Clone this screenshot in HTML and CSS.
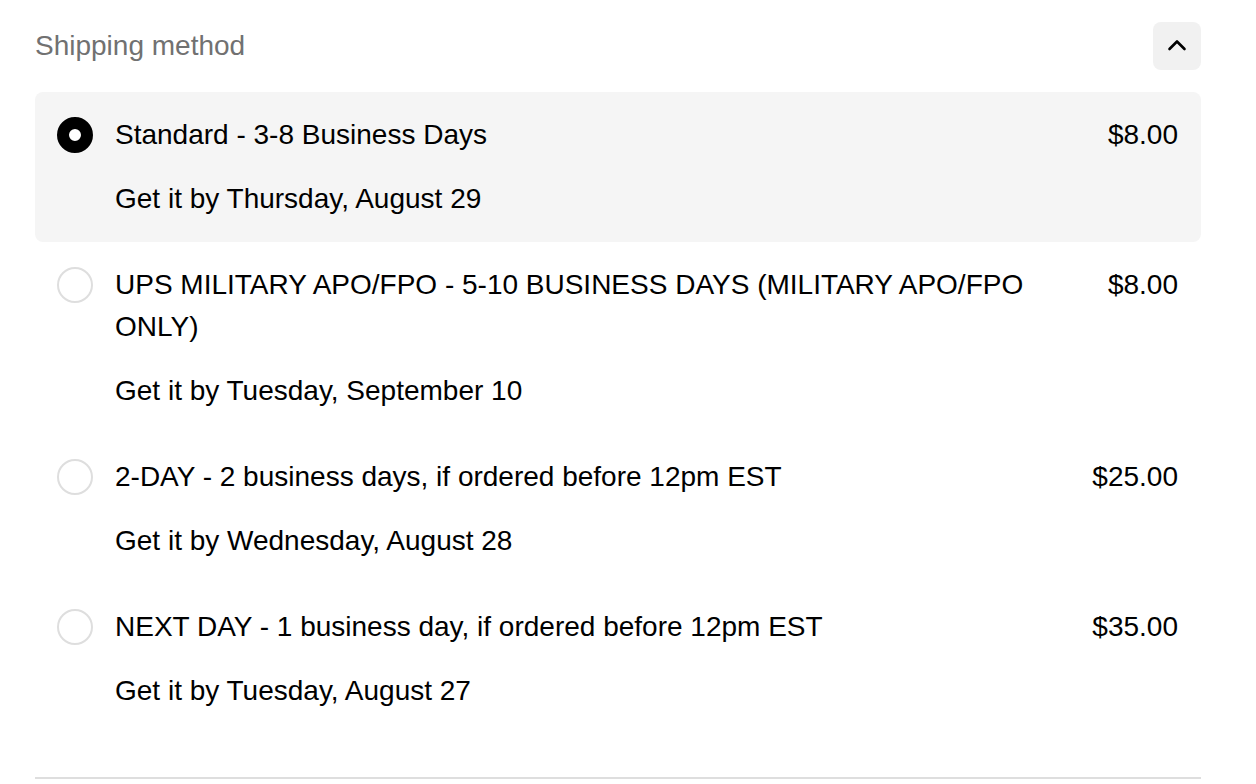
FILE: index.html
```html
<!DOCTYPE html>
<html lang="en">
<head>
<meta charset="utf-8">
<title>Shipping method</title>
<link rel="stylesheet" href="styles.css">
</head>
<body>
<section class="shipping">
  <header class="shipping-head">
    <h2 class="shipping-title">Shipping method</h2>
    <button class="toggle" type="button" aria-label="Collapse">
      <svg width="24" height="24" viewBox="0 0 24 24" fill="none" stroke="#000" stroke-width="2.6" stroke-linecap="round" stroke-linejoin="round"><polyline points="4.5 15 12 7.5 19.5 15"/></svg>
    </button>
  </header>
  <ul class="options">
    <li class="option selected">
      <span class="radio"></span>
      <div class="option-body">
        <div class="option-name">Standard - 3-8 Business Days</div>
        <div class="option-date">Get it by Thursday, August 29</div>
      </div>
      <div class="option-price">$8.00</div>
    </li>
    <li class="option">
      <span class="radio"></span>
      <div class="option-body">
        <div class="option-name">UPS MILITARY APO/FPO - 5-10 BUSINESS DAYS (MILITARY APO/FPO ONLY)</div>
        <div class="option-date">Get it by Tuesday, September 10</div>
      </div>
      <div class="option-price">$8.00</div>
    </li>
    <li class="option">
      <span class="radio"></span>
      <div class="option-body">
        <div class="option-name">2-DAY - 2 business days, if ordered before 12pm EST</div>
        <div class="option-date">Get it by Wednesday, August 28</div>
      </div>
      <div class="option-price">$25.00</div>
    </li>
    <li class="option">
      <span class="radio"></span>
      <div class="option-body">
        <div class="option-name">NEXT DAY - 1 business day, if ordered before 12pm EST</div>
        <div class="option-date">Get it by Tuesday, August 27</div>
      </div>
      <div class="option-price">$35.00</div>
    </li>
  </ul>
  <hr class="divider">
</section>
</body>
</html>
```

FILE: styles.css
```css
* { box-sizing: border-box; }

html, body {
  margin: 0;
  padding: 0;
  background: #fff;
}

body {
  font-family: "Liberation Sans", Arial, Helvetica, sans-serif;
  color: #000;
}

.shipping {
  padding: 22px 55px 0 35px;
}

.shipping-head {
  display: flex;
  align-items: center;
  justify-content: space-between;
  height: 48px;
}

.shipping-title {
  margin: 0;
  font-size: 28px;
  font-weight: 400;
  color: #717171;
  line-height: 48px;
}

.toggle {
  width: 48px;
  height: 48px;
  border: none;
  border-radius: 8px;
  background: #f1f1f1;
  padding: 0;
  display: flex;
  align-items: center;
  justify-content: center;
  cursor: pointer;
}

.options {
  list-style: none;
  margin: 22px 0 0;
  padding: 0;
}

.option {
  display: flex;
  align-items: flex-start;
  padding: 22px 23px 22px 22px;
  border-radius: 8px;
  font-size: 28px;
  line-height: 42px;
}

.option.selected {
  background: #f5f5f5;
}

.radio {
  flex: none;
  width: 36px;
  height: 36px;
  margin-top: 3px;
  border-radius: 50%;
  border: 2px solid #dedede;
  background: #fff;
}

.selected .radio {
  border: 12px solid #000;
  background: #fff;
}

.option-body {
  flex: 1;
  margin-left: 22px;
  display: flex;
  flex-direction: column;
  gap: 22px;
}

.option-price {
  flex: none;
  margin-left: 24px;
  text-align: right;
}

.divider {
  margin: 43px 0 0;
  border: none;
  border-top: 2px solid #dedede;
  height: 0;
}
```
